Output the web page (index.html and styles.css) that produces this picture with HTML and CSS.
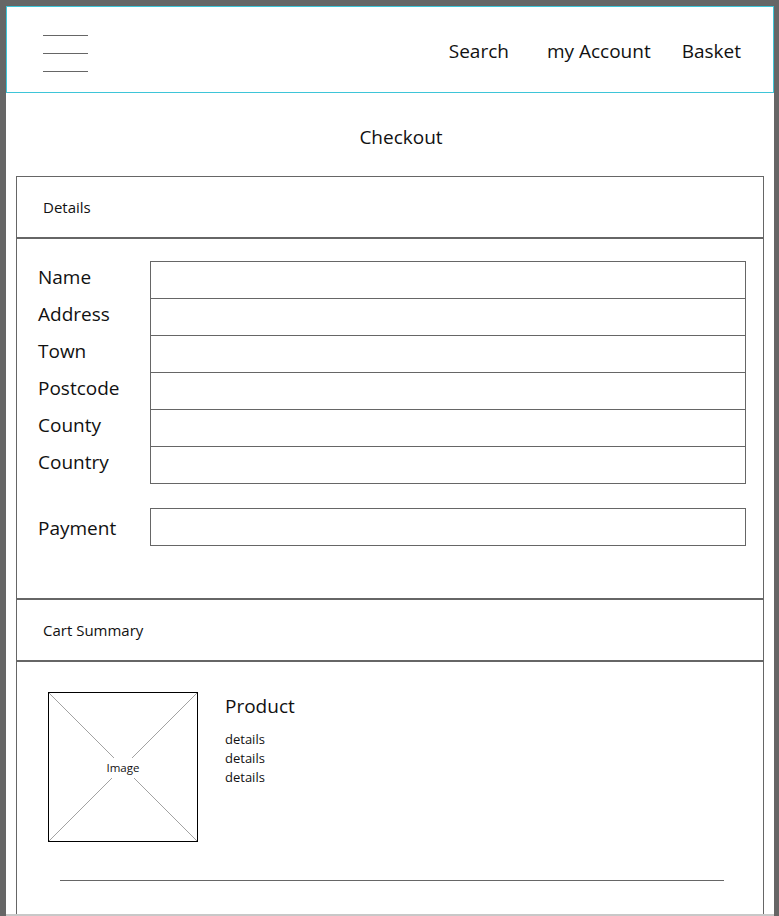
FILE: index.html
```html
<!DOCTYPE html>
<html>
<head>
<meta charset="utf-8">
<link rel="stylesheet" href="styles.css">
</head>
<body>
<div class="page">
  <header class="topbar">
    <div class="burger"><span></span><span></span><span></span></div>
    <nav class="nav">
      <span class="nav-item nav-search">Search</span>
      <span class="nav-item nav-account">my Account</span>
      <span class="nav-item">Basket</span>
    </nav>
  </header>
  <h1 class="title">Checkout</h1>
  <div class="panel">
    <div class="section-head">Details</div>
    <div class="form">
      <div class="row"><span class="label">Name</span><span class="input"></span></div>
      <div class="row"><span class="label">Address</span><span class="input"></span></div>
      <div class="row"><span class="label">Town</span><span class="input"></span></div>
      <div class="row"><span class="label">Postcode</span><span class="input"></span></div>
      <div class="row"><span class="label">County</span><span class="input"></span></div>
      <div class="row"><span class="label">Country</span><span class="input"></span></div>
      <div class="row row-pay"><span class="label">Payment</span><span class="input"></span></div>
    </div>
    <div class="section-head">Cart Summary</div>
    <div class="cart">
      <div class="item">
        <div class="thumb">
          <svg class="cross" viewBox="0 0 148 148" preserveAspectRatio="none">
            <line x1="0" y1="0" x2="148" y2="148"/>
            <line x1="148" y1="0" x2="0" y2="148"/>
          </svg>
          <span class="thumb-label">Image</span>
        </div>
        <div class="info">
          <div class="product">Product</div>
          <div class="detail">details</div>
          <div class="detail">details</div>
          <div class="detail">details</div>
        </div>
      </div>
      <div class="rule"></div>
    </div>
  </div>
</div>
</body>
</html>
```

FILE: styles.css
```css
html, body {
  margin: 0;
  padding: 0;
  height: 916px;
  overflow: hidden;
  background: #666666;
}
body {
  font-family: "Open Sans", "Noto Sans", sans-serif;
  color: #111;
}
.page {
  margin: 6px 5px 0 6px;
  background: #fff;
  height: 908px;
  border-bottom: 2px solid #c8c8c8;
  overflow: hidden;
}
.topbar {
  box-sizing: border-box;
  height: 87px;
  border: 1px solid #3ec5d8;
  display: flex;
  align-items: center;
  justify-content: space-between;
  padding: 0 32px 0 36px;
}
.burger {
  display: flex;
  flex-direction: column;
  gap: 17px;
  width: 45px;
  margin-top: 8px;
}
.burger span {
  display: block;
  height: 1px;
  background: #666;
}
.nav {
  display: flex;
  align-items: center;
  font-size: 19px;
  margin-top: 2px;
}
.nav-search { margin-right: 38px; }
.nav-account { margin-right: 31px; }
.title {
  margin: 0;
  height: 83px;
  box-sizing: border-box;
  padding: 31px 0 0 22px;
  text-align: center;
  font-weight: normal;
  font-size: 19px;
  line-height: 26px;
}
.panel {
  margin: 0 10px;
}
.section-head {
  box-sizing: border-box;
  height: 62px;
  border: 1px solid #666;
  padding-left: 26px;
  display: flex;
  align-items: center;
  font-size: 15px;
}
.form {
  box-sizing: border-box;
  height: 361px;
  border: 1px solid #666;
  padding: 22px 17px 0 21px;
}
.row {
  display: flex;
  align-items: center;
  height: 38px;
  margin-top: -1px;
}
.row:first-child { margin-top: 0; }
.row-pay { margin-top: 24px; }
.label {
  width: 112px;
  font-size: 19px;
  line-height: 26px;
  margin-top: -7px;
}
.row-pay .label { margin-top: 2px; }
.input {
  flex: 1;
  box-sizing: border-box;
  height: 38px;
  border: 1px solid #666;
}
.cart {
  box-sizing: border-box;
  height: 300px;
  border: 1px solid #666;
  padding: 30px 39px 0 31px;
}
.item {
  display: flex;
  align-items: flex-start;
}
.thumb {
  position: relative;
  box-sizing: border-box;
  width: 150px;
  height: 150px;
  border: 1px solid #000;
  display: flex;
  align-items: center;
  justify-content: center;
}
.cross {
  position: absolute;
  left: 0;
  top: 0;
  width: 148px;
  height: 148px;
}
.cross line {
  stroke: #8a8a8a;
  stroke-width: 0.8;
}
.thumb-label {
  position: relative;
  background: #fff;
  font-size: 11.5px;
  line-height: 16px;
  padding: 2px 3px;
  margin-top: 2px;
}
.info {
  margin-left: 27px;
}
.product {
  font-size: 19px;
  line-height: 26px;
  margin-top: 1px;
  margin-bottom: 11px;
}
.detail {
  font-size: 13px;
  line-height: 19px;
}
.rule {
  height: 1px;
  background: #666;
  margin: 38px 0 0 12px;
}
```
